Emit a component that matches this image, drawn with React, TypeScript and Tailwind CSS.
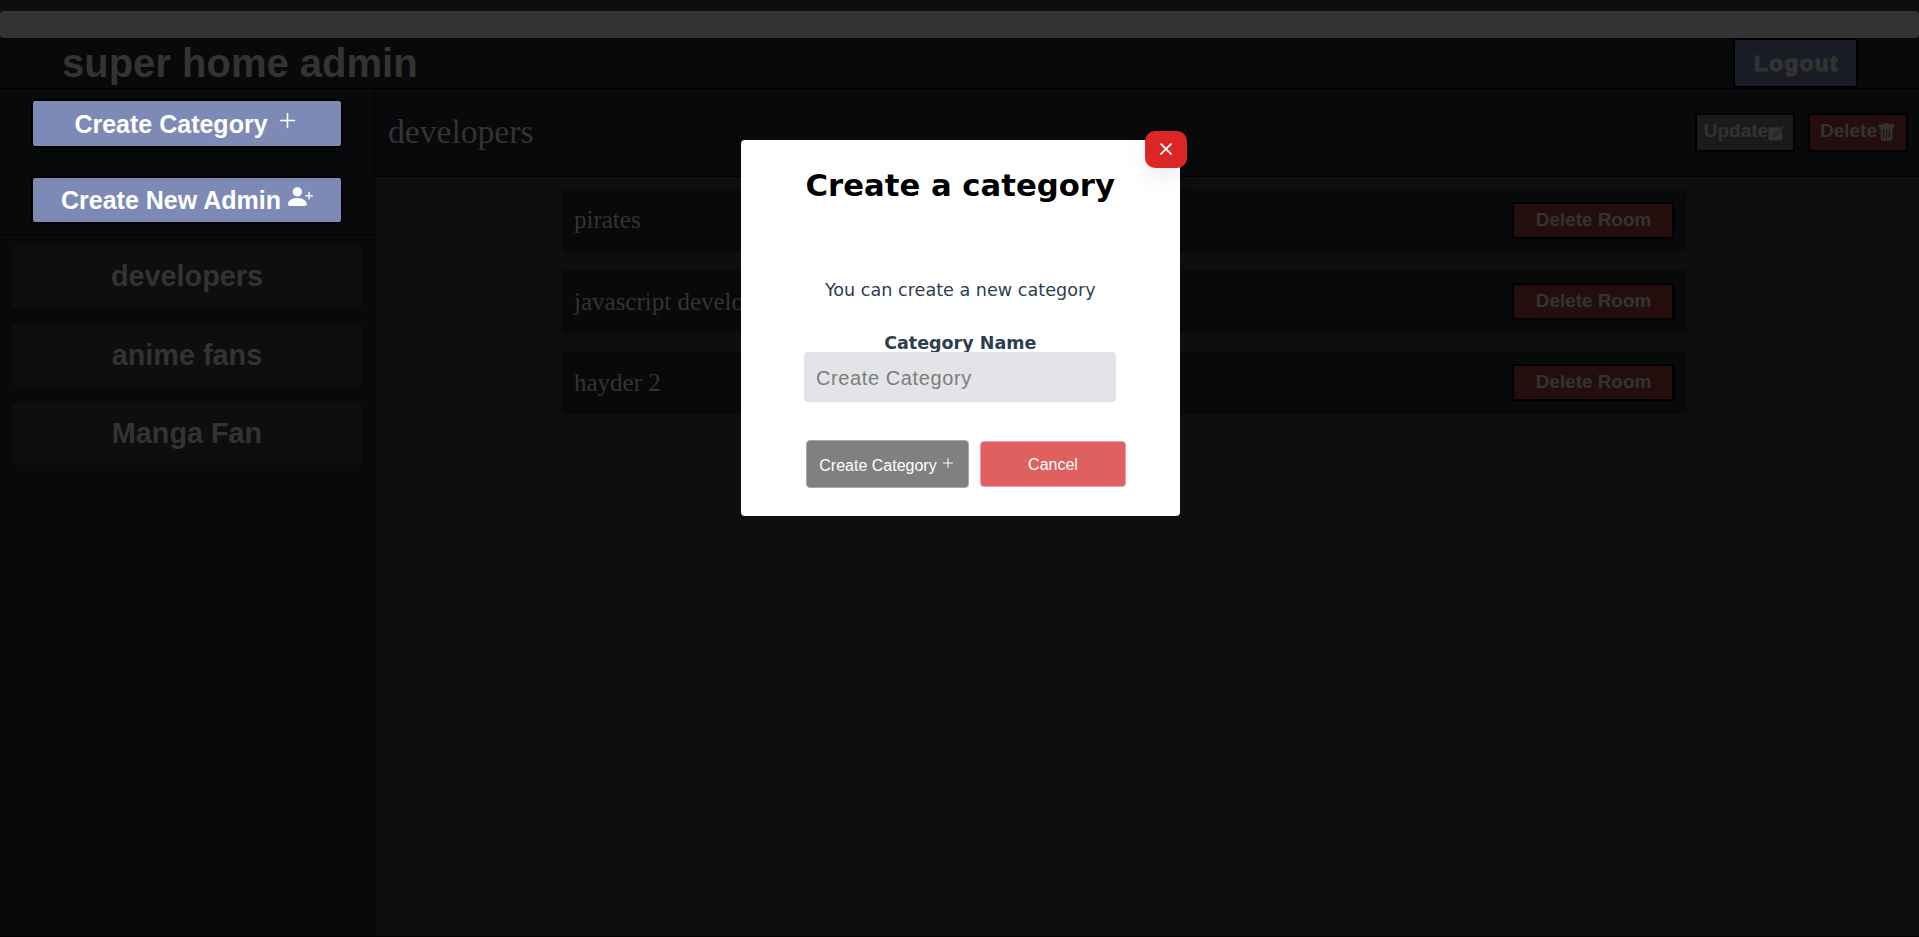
import { BsPersonPlusFill, BsTrashFill } from "react-icons/bs";
import { IoAddOutline } from "react-icons/io5";

const categories = ["developers", "anime fans", "Manga Fan"];
const rooms = ["pirates", "javascript developers", "hayder 2"];

function EditIcon() {
  return (
    <svg width="19" height="19" viewBox="0 0 19 19" className="shrink-0">
      <rect x="0.3" y="4.2" width="14" height="13.2" rx="2" fill="#333333" />
      <path d="M5.6 13.6l.7-2.4 9.4-9.2 1.5 1.5-9.4 9.3z" fill="#333333" stroke="#1a1a1a" strokeWidth="0.9" />
    </svg>
  );
}

function Sidebar() {
  return (
    <aside className="flex w-[375px] flex-col border-r border-black bg-[#08090b]">
      <div className="flex h-[146px] flex-col items-center border-b border-black pt-[10px] pr-[1px]">
        <button className="flex h-[49px] w-[312px] items-center justify-center gap-[7px] rounded border-2 border-black bg-[#7d8ab5] pl-px text-[25px] leading-[45px] font-bold text-white">
          <span className="pt-px">Create Category</span>
          <IoAddOutline size={25} className="mb-[6px]" />
        </button>
        <button className="mt-[28px] flex h-[48px] w-[312px] items-center justify-center gap-[7px] rounded border-2 border-black bg-[#7d8ab5] pl-px text-[25px] leading-[44px] font-bold text-white">
          <span>Create New Admin</span>
          <BsPersonPlusFill size={25} className="mb-[7px]" />
        </button>
      </div>
      <nav className="flex flex-col gap-4 px-3 pt-[10px]">
        {categories.map((name) => (
          <div
            key={name}
            className="flex h-[62.8px] items-center justify-center rounded bg-[#0d0e10] text-[28.8px] font-bold text-[#333333]"
          >
            {name}
          </div>
        ))}
      </nav>
    </aside>
  );
}

function Content() {
  return (
    <main className="flex flex-1 flex-col bg-[#0d0e10]">
      <div className="flex h-[88px] items-center border-b border-black bg-[#08090b] pr-[11px] pl-[13px]">
        <h2 className="flex-1 pb-px font-['Liberation_Serif',serif] text-[33.6px] leading-[40px] text-[#333333]">
          developers
        </h2>
        <button className="flex h-[39px] w-[100px] items-center justify-center border-2 border-black bg-[#1a1a1a] pl-px text-[19px] font-bold text-[#333333]">
          <span className="pb-[2px]">Update</span>
          <EditIcon />
        </button>
        <button className="ml-[13px] flex h-[39px] w-[100px] items-center justify-center border-2 border-black bg-[#240e0d] text-[19px] font-bold text-[#333333]">
          <span className="pb-[2px]">Delete</span>
          <BsTrashFill size={19} className="mb-px" />
        </button>
      </div>
      <div className="ml-[187px] flex w-[1125px] flex-col gap-[18.7px] pt-[12px]">
        {rooms.map((name) => (
          <div key={name} className="flex h-[62.6px] items-center rounded bg-[#08090b] pr-[13px] pl-3">
            <span className="flex-1 font-['Liberation_Serif',serif] text-[25px] leading-[30px] text-[#333333]">
              {name}
            </span>
            <button className="h-[37px] w-[162px] border-2 border-black bg-[#240e0d] pb-[2px] pl-px text-[18.9px] leading-[31px] font-bold text-[#333333]">
              Delete Room
            </button>
          </div>
        ))}
      </div>
    </main>
  );
}

function CategoryModal() {
  return (
    <div className="absolute inset-0 flex items-start pt-[140px] pl-[741px]">
      <div className="relative flex h-[376px] w-[438.5px] flex-col rounded bg-white font-['DejaVu_Sans',sans-serif]">
        <button className="absolute -top-[9px] -right-[7.5px] flex h-[37px] w-[42px] items-center justify-center rounded-[10px] bg-[#dc2626] shadow-[0_8px_22px_rgba(0,0,0,0.08)]">
          <svg width="12" height="12" viewBox="0 0 12 12" className="mb-px" stroke="#ffffff" strokeWidth="1.8" fill="none">
            <path d="M0.5 0.5l11 11M11.5 0.5L0.5 11.5" />
          </svg>
        </button>
        <h1 className="mt-[26px] text-center text-[30.7px] leading-[40px] font-bold whitespace-nowrap text-black">
          Create a category
        </h1>
        <p className="mt-[72px] text-center text-[17.6px] leading-[24px] text-[#2c3e50]">
          You can create a new category
        </p>
        <label className="mt-[32px] text-center text-[17.5px] leading-[18px] font-bold text-[#2c3e50]">
          Category Name
        </label>
        <input
          placeholder="Create Category"
          className="ml-[63px] h-[50px] w-[312px] rounded bg-[#e3e4e8] px-3 pt-[2px] font-['Liberation_Sans',sans-serif] text-[20px] tracking-[0.6px] placeholder:text-[#7c7c7c]"
        />
        <div className="mt-[38px] ml-[65px] flex items-center gap-[11px] font-['Liberation_Sans',sans-serif] text-[16px] text-white">
          <button className="flex h-[48px] w-[163px] items-center justify-center gap-[3px] rounded border border-[#a8a8a8] bg-[#808080]">
            <span className="pt-[3px]">Create Category</span>
            <IoAddOutline size={16} className="mb-[3px]" />
          </button>
          <button className="h-[46px] w-[146px] rounded border border-[#ec9a9a] bg-[#e06060] pt-px">Cancel</button>
        </div>
      </div>
    </div>
  );
}

export default function App() {
  return (
    <div className="relative flex h-[937px] flex-col overflow-hidden border-b border-black bg-[#0d0e10] pt-[11px] font-['Liberation_Sans',sans-serif]">
      <div className="bg-[#08090b]">
        <div className="h-[27px] rounded bg-[#333333]" />
      </div>
      <header className="flex h-[51px] items-start justify-between border-b border-black bg-[#08090b] pr-[61px] pl-[62px]">
        <h1 className="text-[40px] leading-[50px] font-bold text-[#333333]">super home admin</h1>
        <button className="h-[50px] w-[125px] rounded border-2 border-black bg-[#191c24] pt-px pl-[2px] text-[22.6px] leading-[46px] font-bold tracking-[1.4px] text-[#333333] [-webkit-text-stroke:1.2px_#333333]">
          Logout
        </button>
      </header>
      <div className="flex flex-1">
        <Sidebar />
        <Content />
      </div>
      <CategoryModal />
    </div>
  );
}
